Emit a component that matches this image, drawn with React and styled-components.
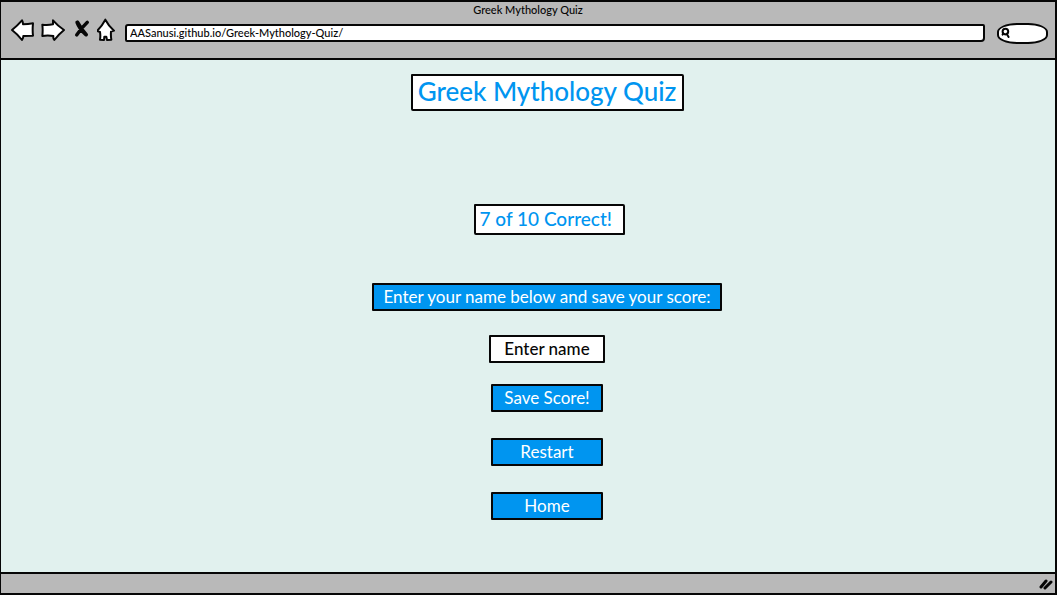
import React from "react";
import styled, { createGlobalStyle } from "styled-components";

const ink = "#060606";
const blue = "#0095f0";

const GlobalStyle = createGlobalStyle`
  *, *::before, *::after { box-sizing: border-box; }
  body {
    margin: 0;
    background: #fff;
    color: ${ink};
    font-family: Lato, "Noto Sans", sans-serif;
  }
`;

const Window = styled.div`
  display: flex;
  flex-direction: column;
  min-height: calc(100vh - 2px);
  margin-right: 3px;
  border: 2px solid ${ink};
  border-left-width: 1px;
`;

const Chrome = styled.header`
  display: flex;
  flex-direction: column;
  height: 58px;
  background: #b9b9b9;
  border-bottom: 2px solid ${ink};
`;

const WindowTitle = styled.div`
  height: 16px;
  font-size: 11px;
  line-height: 16px;
  font-weight: 500;
  text-align: center;
`;

const Toolbar = styled.div`
  display: flex;
  align-items: center;
  gap: 12px;
  padding: 0 7px 0 10px;
  height: 24px;
`;

const NavButtons = styled.nav`
  display: flex;
  align-items: center;
  gap: 7px;
  margin-right: -3px;
`;

const NavButton = styled.button`
  display: flex;
  padding: 0;
  border: 0;
  background: none;
  cursor: pointer;
`;

const Icon = styled.svg`
  display: block;
  width: ${(p) => p.$w}px;
  height: 24px;
  fill: ${(p) => (p.$plain ? "none" : "#fff")};
  stroke: ${ink};
  stroke-width: ${(p) => p.$stroke || 6};
  stroke-linecap: round;
  stroke-linejoin: round;
`;

const Address = styled.input`
  flex: 1;
  min-width: 0;
  height: 18px;
  margin-top: 6px;
  padding: 0 3px 2px;
  border: 2px solid ${ink};
  border-radius: 3px 2px 4px 2px;
  background: #fff;
  color: ${ink};
  font: 500 11px Lato, "Noto Sans", sans-serif;
`;

const Search = styled.label`
  display: flex;
  align-items: center;
  width: 51px;
  height: 21px;
  margin-top: 6px;
  padding: 0 4px 0 2px;
  border: 2px solid ${ink};
  border-radius: 20px / 9px;
  background: #fff;
`;

const SearchIcon = styled.svg`
  flex: none;
  width: 9px;
  height: 12px;
  fill: none;
  stroke: ${ink};
  stroke-width: 2;
  stroke-linecap: round;
`;

const SearchInput = styled.input`
  width: 100%;
  min-width: 0;
  height: 12px;
  padding: 0;
  border: 0;
  background: none;
  font-size: 10px;
`;

const Page = styled.main`
  flex: 1;
  display: flex;
  flex-direction: column;
  align-items: center;
  padding: 14px 0 52px 38px;
  background: #e1f1ee;
`;

const Title = styled.h1`
  margin: 0;
  width: 273px;
  height: 37px;
  border: 2px solid ${ink};
  border-radius: 1px 2px 1px 2px;
  background: #fff;
  color: ${blue};
  font-size: 26px;
  line-height: 31px;
  font-weight: 500;
  text-align: center;
  white-space: nowrap;
`;

const Score = styled.p`
  margin: 93px 0 48px 4px;
  width: 151px;
  height: 31px;
  padding-left: 4px;
  border: 2px solid ${ink};
  border-radius: 1px 2px 1px 2px;
  background: #fff;
  color: ${blue};
  font-size: 19px;
  font-weight: 500;
  line-height: 25px;
  white-space: nowrap;
`;

const Form = styled.form`
  display: flex;
  flex-direction: column;
  align-items: center;
`;

const Prompt = styled.label`
  width: 350px;
  height: 28px;
  border: 2px solid ${ink};
  border-radius: 1px;
  background: ${blue};
  color: #fff;
  font-size: 17px;
  line-height: 23px;
  text-align: center;
  white-space: nowrap;
`;

const NameInput = styled.input`
  width: 116px;
  height: 28px;
  margin: 24px 0 21px;
  padding: 0 0 2px;
  border: 2px solid ${ink};
  border-radius: 1px;
  background: #fff;
  font: 500 17px Lato, "Noto Sans", sans-serif;
  text-align: center;
  &::placeholder { color: ${ink}; opacity: 1; }
`;

const Actions = styled.div`
  display: flex;
  flex-direction: column;
  gap: 26px;
`;

const Button = styled.button`
  width: 112px;
  height: 28px;
  padding: 0 0 2px;
  border: 2px solid ${ink};
  border-radius: 1px;
  background: ${blue};
  color: #fff;
  font: 17px Lato, "Noto Sans", sans-serif;
  cursor: pointer;
`;

const StatusBar = styled.footer`
  display: flex;
  justify-content: flex-end;
  align-items: center;
  height: 21px;
  padding-right: 2px;
  border-top: 2px solid ${ink};
  background: #b9b9b9;
`;

const Grip = styled.svg`
  width: 14px;
  height: 12px;
  fill: none;
  stroke: ${ink};
  stroke-width: 3;
  stroke-linecap: round;
`;

export default function App() {
  return (
    <>
      <GlobalStyle />
      <Window>
        <Chrome>
          <WindowTitle>Greek Mythology Quiz</WindowTitle>
          <Toolbar>
            <NavButtons aria-label="Browser">
              <NavButton aria-label="Back">
                <Icon $w={23} viewBox="33 52 69 72">
                  <path d="M36 88 Q51 76 66 59 Q69 64 69 71 Q84 71 99 68 Q97 88 99 105 L70 106 Q70 112 66 118 Q53 101 36 88Z" />
                </Icon>
              </NavButton>
              <NavButton aria-label="Forward">
                <Icon $w={24} viewBox="124 52 72 72">
                  <path d="M128 72 Q144 74 160 71 L160 59 Q174 75 193 88 Q177 101 164 118 Q160 113 161 106 Q144 103 128 106 Q130 89 128 72Z" />
                </Icon>
              </NavButton>
              <NavButton aria-label="Stop">
                <Icon $w={18} $plain $stroke={10} viewBox="217 54 54 72">
                  <path d="M232 67 Q238 84 258 104 M234 67 Q244 86 260 104 M263 67 Q247 82 231 105" />
                </Icon>
              </NavButton>
              <NavButton aria-label="Home page">
                <Icon $w={19} viewBox="291 52 57 72">
                  <path d="M316 57 Q326 76 342 90 L333 93 Q332 106 334 117 L321 118 L319 108 L313 108 L312 118 L300 117 Q302 105 300 94 L291 91 Q306 76 316 57Z" overflow="visible" />
                </Icon>
              </NavButton>
            </NavButtons>
            <Address aria-label="Address" defaultValue="AASanusi.github.io/Greek-Mythology-Quiz/" />
            <Search>
              <SearchIcon viewBox="0 0 9 12" aria-hidden="true">
                <circle cx="4.4" cy="4.6" r="2.8" />
                <path d="M2.2 6.6 L1.6 7.6 M5.6 6.8 L7.6 10" />
              </SearchIcon>
              <SearchInput aria-label="Search" />
            </Search>
          </Toolbar>
        </Chrome>
        <Page>
          <Title>Greek Mythology Quiz</Title>
          <Score>7 of 10 Correct!</Score>
          <Form onSubmit={(e) => e.preventDefault()}>
            <Prompt htmlFor="player">Enter your name below and save your score:</Prompt>
            <NameInput id="player" placeholder="Enter name" />
            <Actions>
              <Button type="submit">Save Score!</Button>
              <Button type="button">Restart</Button>
              <Button type="button">Home</Button>
            </Actions>
          </Form>
        </Page>
        <StatusBar>
          <Grip viewBox="0 0 14 12">
            <path d="M2 9 L7 3 M6 10 L12 4" />
          </Grip>
        </StatusBar>
      </Window>
    </>
  );
}
